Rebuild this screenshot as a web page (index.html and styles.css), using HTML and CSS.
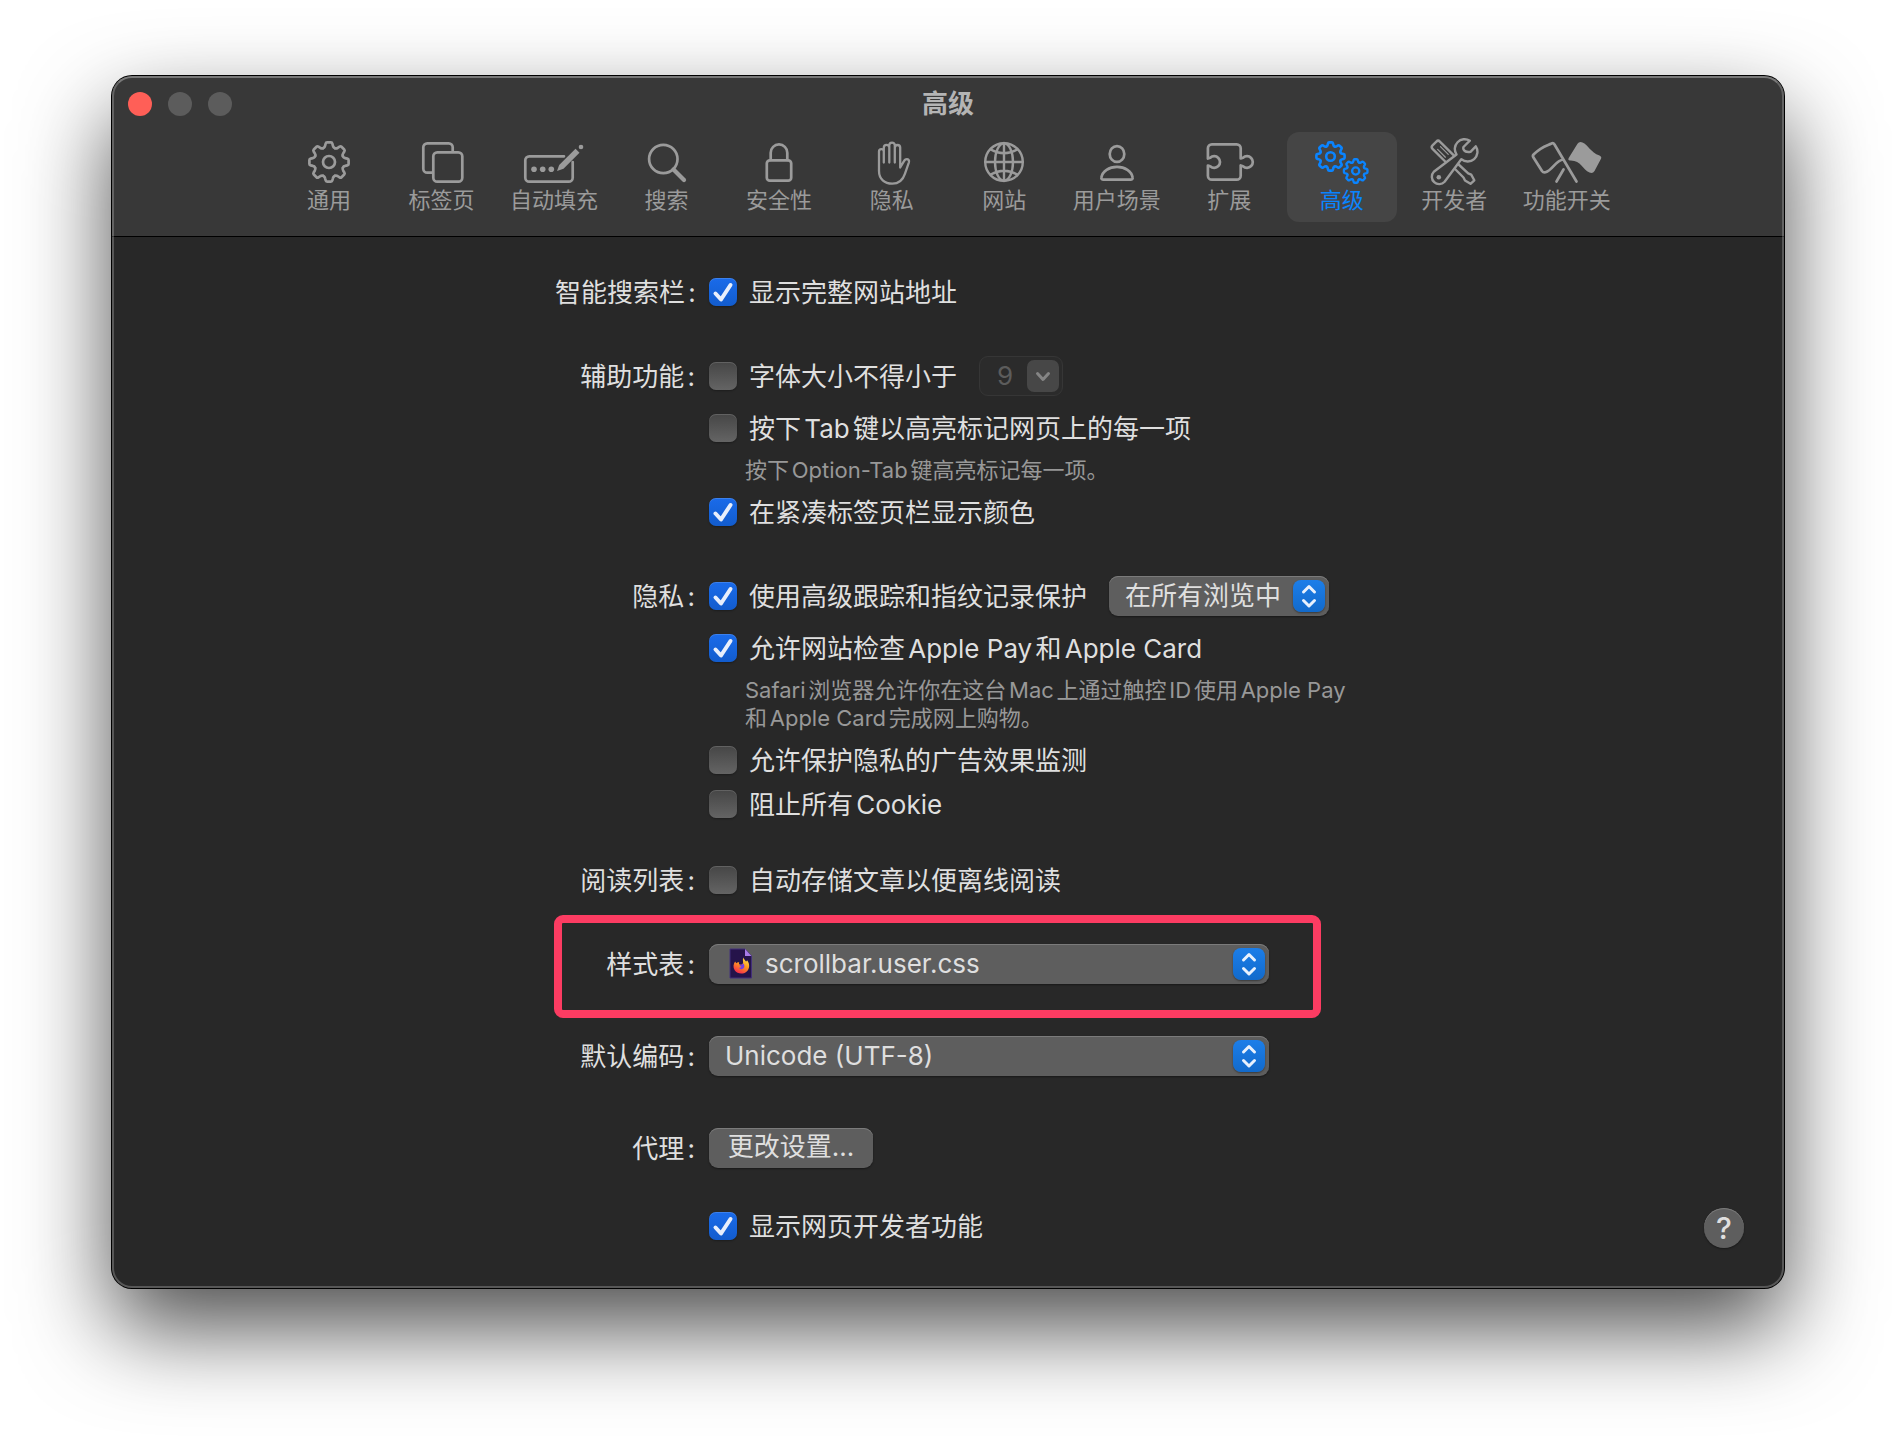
FILE: index.html
```html
<!DOCTYPE html>
<html lang="zh-CN">
<head>
    <meta charset="UTF-8">
    <meta name="viewport" content="width=device-width, initial-scale=1.0">
    <title>高级</title>
    <link rel="stylesheet" href="styles.css">
</head>
<body>
    <!-- shared shapes -->
    <svg class="defs" aria-hidden="true">
        <defs>
            <path id="tooth" d="M-5.7-13.9Q-4.2-14.5-3.9-16.2L-3.4-18.3Q-3.1-19.6-1.9-19.6H1.9Q3.1-19.6 3.4-18.3L3.9-16.2Q4.2-14.5 5.7-13.9"/>
            <g id="gear">
                <use href="#tooth"/>
                <use href="#tooth" transform="rotate(45)"/>
                <use href="#tooth" transform="rotate(90)"/>
                <use href="#tooth" transform="rotate(135)"/>
                <use href="#tooth" transform="rotate(180)"/>
                <use href="#tooth" transform="rotate(225)"/>
                <use href="#tooth" transform="rotate(270)"/>
                <use href="#tooth" transform="rotate(315)"/>
                <circle r="6"/>
            </g>
            <symbol id="tick" viewBox="0 0 28 28">
                <path d="M6.5 15.5l5.5 6L21.500 7" fill="none" stroke="#e8effc" stroke-width="4" stroke-linecap="round" stroke-linejoin="round"/>
            </symbol>
            <symbol id="updown" viewBox="0 0 32 32">
                <path d="M10.500 12L16 6.500l5.500 5.500M10.500 20.500L16 26l5.500-5.500" fill="none" stroke="#e8f1fd" stroke-width="3" stroke-linecap="round" stroke-linejoin="round"/>
            </symbol>
        </defs>
    </svg>

    <main class="window">
        <header class="header">
            <div class="titlebar">
                <div class="lights">
                    <button class="light close" aria-label="关闭"></button>
                    <button class="light" aria-label="最小化" disabled></button>
                    <button class="light" aria-label="缩放" disabled></button>
                </div>
                <h1>高级</h1>
            </div>
            <nav class="toolbar">
                <button class="tab">
                    <svg viewBox="0 0 80 48"><use href="#gear" transform="translate(40 24)"/></svg>
                    <span>通用</span>
                </button>
                <button class="tab">
                    <svg viewBox="0 0 80 48"><path d="M50.700 13V9.300a4 4 0 0 0-4-4H25.300a4 4 0 0 0-4 4v21.400a4 4 0 0 0 4 4H30"/><rect x="31.300" y="14.300" width="29" height="29.400" rx="4"/></svg>
                    <span>标签页</span>
                </button>
                <button class="tab">
                    <svg viewBox="0 0 80 48"><path d="M50 18.300H15.300a4 4 0 0 0-4 4v17.400a4 4 0 0 0 4 4h39.400a4 4 0 0 0 4-4V24"/><g class="solid"><circle cx="20" cy="31.300" r="2.800"/><circle cx="28.700" cy="31.300" r="2.800"/><circle cx="37.300" cy="31.300" r="2.800"/><path d="M43 33l2.200-6L61.500 10.700l4 4L49.500 30.700z"/><circle cx="67" cy="9" r="2.300"/></g></svg>
                    <span>自动填充</span>
                </button>
                <button class="tab">
                    <svg viewBox="0 0 80 48"><circle cx="36.300" cy="21" r="14.200"/><path d="M46.500 31.500l10.500 10.500" stroke-width="4.200"/></svg>
                    <span>搜索</span>
                </button>
                <button class="tab">
                    <svg viewBox="0 0 80 48"><rect x="27.800" y="22.300" width="24.400" height="20.400" rx="3"/><path d="M31.700 22V14.700a8.300 8.300 0 0 1 16.600 0V22"/></svg>
                    <span>安全性</span>
                </button>
                <button class="tab">
                    <svg viewBox="0 0 80 48" stroke-width="2.300"><path d="M31.800 24.500V13.500a2.400 2.400 0 0 0-4.800 0V33c0 8 5.500 12.600 13.300 12.600 7 0 10.700-4 12.600-9.800l4-11.500c.6-2-.6-3.200-2-3.200s-2.400.8-3.200 2.600L48.200 29.500V9.700a2.700 2.700 0 0 0-5.400 0V24.500M42.800 10V7.300a2.750 2.750 0 0 0-5.500 0V24.500M37.300 10V9.700a2.750 2.750 0 0 0-5.500 0V14"/></svg>
                    <span>隐私</span>
                </button>
                <button class="tab">
                    <svg viewBox="0 0 80 48" stroke-width="2.400"><circle cx="40" cy="24" r="18.800"/><ellipse cx="40" cy="24" rx="9" ry="18.800"/><path d="M40 5v38M21.200 24h37.600M26.700 11.500Q40 19 53.300 11.500M26.700 36.500Q40 29 53.300 36.500"/></svg>
                    <span>网站</span>
                </button>
                <button class="tab">
                    <svg viewBox="0 0 80 48"><ellipse cx="40" cy="16" rx="7.300" ry="7.900"/><path d="M24.400 39.500c1-6.500 7.600-10.600 15.600-10.600s14.600 4.100 15.600 10.600c.3 1.400-.6 2.200-2 2.200H26.400c-1.400 0-2.300-.8-2-2.200z"/></svg>
                    <span>用户场景</span>
                </button>
                <button class="tab">
                    <svg viewBox="0 0 80 48"><path d="M18.900 20.500V10.300a4 4 0 0 1 4-4h24.800a4 4 0 0 1 4 4V20.500L54 19.800a5.800 5.800 0 1 1 0 8.400L51.700 27.500V37.700a4 4 0 0 1-4 4H22.900a4 4 0 0 1-4-4V27.500L21.200 28.200a5.800 5.800 0 1 0 0-8.400z"/></svg>
                    <span>扩展</span>
                </button>
                <button class="tab active">
                    <svg viewBox="0 0 80 48"><use href="#gear" transform="translate(28.500 18.500) scale(.72)" stroke-width="3.600"/><use href="#gear" transform="translate(53.700 33) scale(.6)" stroke-width="3.900"/></svg>
                    <span>高级</span>
                </button>
                <button class="tab">
                    <svg viewBox="0 0 80 48" stroke-width="2.400"><g transform="translate(21.500 6.500) rotate(45)"><rect x="-1.500" y="-5.200" width="25" height="10.400" rx="2.500"/><path d="M5 -2h11M5 2h11" stroke-width="1.200"/></g><path d="M38 28L49.500 39.500 51 42.500 56.500 45.800 60.300 42.300 57.200 36.600 54.200 35.400 43 25"/><path class="mask" d="M55.800 2.700A9.800 9.800 0 0 0 42.500 16.500L19.800 33.800A7.300 7.300 0 1 0 30.600 43.800L47.300 21.200A9.800 9.800 0 0 0 61.800 8.300L56.500 13.800Q51.500 14.500 50 12.300 48.500 9.500 50 8.500z"/><circle class="solid" cx="24.800" cy="39.200" r="2.300"/></svg>
                    <span>开发者</span>
                </button>
                <button class="tab">
                    <svg viewBox="0 0 80 48"><path d="M49.500 43.500L27.500 6.500Q26.300 4.600 24.500 5.500C19 8 14.500 8.500 6.800 16.300Q5.300 17.700 6.300 19.300L15 33Q16.300 34.800 18.500 34.300C26 32 28 22.500 36.500 21.500M36.500 31.500L29.500 43.500"/><path class="solid" d="M50.500 5.700Q52.300 3.300 55.500 4.500C61 6.500 63.500 14.500 72.500 17.500Q75 18.700 74 20.800L67.500 33Q65.800 35.800 62.500 34.500C55.500 31.500 54 22 43 22.500Q40.500 22.300 41.700 20z"/></svg>
                    <span>功能开关</span>
                </button>
            </nav>
        </header>

        <form class="form">
            <section class="row">
                <div class="label">智能搜索栏:</div>
                <div class="controls">
                    <div class="line">
                        <label class="option"><span class="box"><input type="checkbox" checked><svg><use href="#tick"/></svg></span>显示完整网站地址</label>
                    </div>
                </div>
            </section>

            <section class="row">
                <div class="label">辅助功能:</div>
                <div class="controls">
                    <div class="line">
                        <label class="option"><span class="box"><input type="checkbox"><svg><use href="#tick"/></svg></span>字体大小不得小于</label>
                        <div class="combo">
                            <input type="text" value="9" aria-label="最小字体大小" disabled>
                            <button type="button" aria-label="选择字体大小" disabled>
                                <svg viewBox="0 0 32 32"><path d="M10.500 13.500L16 19.500l5.500-6" fill="none" stroke="#858585" stroke-width="3" stroke-linecap="round" stroke-linejoin="round"/></svg>
                            </button>
                        </div>
                    </div>
                    <div class="line">
                        <label class="option"><span class="box"><input type="checkbox"><svg><use href="#tick"/></svg></span>按下Tab键以高亮标记网页上的每一项</label>
                    </div>
                    <p class="hint">按下Option-Tab键高亮标记每一项。</p>
                    <div class="line">
                        <label class="option"><span class="box"><input type="checkbox" checked><svg><use href="#tick"/></svg></span>在紧凑标签页栏显示颜色</label>
                    </div>
                </div>
            </section>

            <section class="row">
                <div class="label">隐私:</div>
                <div class="controls">
                    <div class="line">
                        <label class="option"><span class="box"><input type="checkbox" checked><svg><use href="#tick"/></svg></span>使用高级跟踪和指纹记录保护</label>
                        <div class="popup small">
                            <select aria-label="保护范围"><option>在所有浏览中</option></select>
                            <svg class="arrows"><use href="#updown"/></svg>
                        </div>
                    </div>
                    <div class="line">
                        <label class="option"><span class="box"><input type="checkbox" checked><svg><use href="#tick"/></svg></span>允许网站检查Apple Pay和Apple Card</label>
                    </div>
                    <p class="hint">Safari浏览器允许你在这台Mac上通过触控ID使用Apple Pay<br>和Apple Card完成网上购物。</p>
                    <div class="line">
                        <label class="option"><span class="box"><input type="checkbox"><svg><use href="#tick"/></svg></span>允许保护隐私的广告效果监测</label>
                    </div>
                    <div class="line tight">
                        <label class="option"><span class="box"><input type="checkbox"><svg><use href="#tick"/></svg></span>阻止所有Cookie</label>
                    </div>
                </div>
            </section>

            <section class="row near">
                <div class="label">阅读列表:</div>
                <div class="controls">
                    <div class="line">
                        <label class="option"><span class="box"><input type="checkbox"><svg><use href="#tick"/></svg></span>自动存储文章以便离线阅读</label>
                    </div>
                </div>
            </section>

            <section class="row highlight">
                <label class="label" for="stylesheet">样式表:</label>
                <div class="popup with-icon">
                    <svg class="file" viewBox="0 0 24 32">
                        <defs>
                            <linearGradient id="flame" x1=".8" y1="0" x2=".3" y2="1">
                                <stop offset="0" stop-color="#ffe94a"/>
                                <stop offset=".45" stop-color="#ff9a1f"/>
                                <stop offset="1" stop-color="#f5264f"/>
                            </linearGradient>
                        </defs>
                        <path d="M1 1h15l6.500 7v22H1z" fill="#25134a" stroke="#43307a"/>
                        <path d="M16 1l6.500 7H16z" fill="#a77be8"/>
                        <path d="M14.500 9.500c.2 1.800 1.500 2.300 2.500 4 .8-.3 1-.8.900-1.500 2.600 3 3.200 7.500.6 10.700-3.300 4-10 3.800-12.800-.4-1.900-3-1.400-6.300.4-8.800l1.200 1.700c.9-.8 1.900-1 2.900-.7-.7 1.300.2 2.300 1.800 2.300 1.300 0 2.200-1 2.100-2.500-.1-1.600-.6-3.300.4-4.800z" fill="url(#flame)"/>
                        <path d="M10.500 16.500c1.500.8 2.800.2 3.500-1.200 1.800 1.500 1.900 4.200.2 5.300-1.500 1-3.500.6-4.400-.9 1.300.2 2.200-.3 2.500-1.300-1 .1-1.800-.6-1.800-1.900z" fill="#7540e0"/>
                    </svg>
                    <select id="stylesheet"><option>scrollbar.user.css</option></select>
                    <svg class="arrows"><use href="#updown"/></svg>
                </div>
            </section>

            <section class="row far">
                <label class="label" for="encoding">默认编码:</label>
                <div class="popup">
                    <select id="encoding"><option>Unicode (UTF-8)</option></select>
                    <svg class="arrows"><use href="#updown"/></svg>
                </div>
            </section>

            <section class="row far">
                <div class="label">代理:</div>
                <div class="controls">
                    <button type="button" class="push">更改设置...</button>
                </div>
            </section>

            <section class="row last">
                <div class="label"></div>
                <div class="controls">
                    <div class="line">
                        <label class="option"><span class="box"><input type="checkbox" checked><svg><use href="#tick"/></svg></span>显示网页开发者功能</label>
                    </div>
                </div>
            </section>
        </form>

        <button class="help" aria-label="帮助">?</button>
    </main>
</body>
</html>
```
FILE: styles.css
```css
* {
    margin: 0;
    padding: 0;
    box-sizing: border-box;
}

body {
    min-height: 100vh;
    padding: 76px 112px 148px;
    background: #fff;
    color: #dfdfdf;
    font-family: Inter, "Noto Sans CJK SC", sans-serif;
    font-size: 26px;
    line-height: 40px;
    text-autospace: normal;
    overflow: hidden;
}

button, input, select {
    font: inherit;
    color: inherit;
    border: none;
    background: none;
    appearance: none;
}

.defs {
    position: absolute;
    width: 0;
    height: 0;
}

.window {
    position: relative;
    background: #282828;
    border-radius: 20px;
    padding-bottom: 42px;
    box-shadow: 0 0 0 1px #000, 0 40px 90px rgba(0, 0, 0, 0.7);
}

/* light rim around the whole window */
.window::after {
    content: "";
    position: absolute;
    inset: 0;
    border: 2px solid rgba(255, 255, 255, 0.22);
    border-top-color: rgba(255, 255, 255, 0.32);
    border-radius: 20px;
    pointer-events: none;
}

.header {
    background: #383838;
    border-bottom: 1px solid #000;
    border-radius: 20px 20px 0 0;
    padding-bottom: 14px;
}

.titlebar {
    display: grid;
    grid-template-columns: 1fr auto 1fr;
    align-items: center;
    height: 56px;
    padding: 0 16px;
}

.titlebar h1 {
    color: #b4b4b4;
    font-size: 26px;
    font-weight: bold;
}

.lights {
    display: flex;
    gap: 16px;
}

.light {
    width: 24px;
    height: 24px;
    border-radius: 50%;
    background: #5c5c5c;
}

.light.close {
    background: #ff5f57;
}

.toolbar {
    display: flex;
    justify-content: space-between;
    max-width: 1348px;
    margin: 0 auto;
}

.tab {
    display: flex;
    flex-direction: column;
    align-items: center;
    width: 110px;
    height: 90px;
    padding-top: 6px;
    border-radius: 12px;
    color: #9b9b9b;
    font-size: 22px;
    line-height: 28px;
}

.tab svg {
    width: 80px;
    height: 48px;
    fill: none;
    stroke: currentColor;
    stroke-linecap: round;
    stroke-linejoin: round;
}

.tab svg:not([stroke-width]) {
    stroke-width: 2.7px;
}

.tab .solid {
    fill: currentColor;
    stroke: none;
}

.tab .mask {
    fill: #383838;
}

.tab.active {
    background: #454545;
    color: #0a84ff;
}

.form {
    max-width: 786px;
    margin: 0 auto;
    padding-top: 35px;
}

.row {
    position: relative;
    display: grid;
    grid-template-columns: 140px 1fr;
    column-gap: 14px;
}

.row + .row {
    margin-top: 44px;
}

.row + .near {
    margin-top: 36px;
}

.row + .far {
    margin-top: 52px;
}

.row + .last {
    margin-top: 38px;
}

.label {
    height: 40px;
    padding-top: 1px;
    text-align: right;
    white-space: nowrap;
}

.line {
    display: flex;
    align-items: center;
    height: 40px;
}

.line + .line {
    margin-top: 12px;
}

.line + .tight {
    margin-top: 4px;
}

.option {
    display: flex;
    align-items: center;
    gap: 12px;
    padding-top: 2px;
    white-space: nowrap;
}

.box {
    position: relative;
    width: 28px;
    height: 28px;
    margin-bottom: 2px;
}

.box input {
    display: block;
    width: 28px;
    height: 28px;
    border-radius: 7px;
    background: linear-gradient(#464646, #646464);
    box-shadow: inset 0 1px 0 rgba(255, 255, 255, 0.15), 0 1px 2px rgba(0, 0, 0, 0.3);
}

.box svg {
    position: absolute;
    inset: 0;
    width: 28px;
    height: 28px;
    display: none;
    pointer-events: none;
}

.box input:checked {
    background: linear-gradient(#1a6bea, #125ccd);
}

.box input:checked + svg {
    display: block;
}

.hint {
    margin: 8px 0 8px 36px;
    color: #989898;
    font-size: 22px;
    line-height: 28px;
    white-space: nowrap;
}

.combo {
    display: flex;
    width: 84px;
    height: 40px;
    margin-left: 22px;
    padding: 3px;
    border: 1px solid #363636;
    border-radius: 9px;
    background: #2b2b2b;
}

.combo input {
    width: 44px;
    padding-left: 14px;
    color: #5c5c5c;
}

.combo button {
    width: 32px;
    height: 32px;
    border-radius: 7px;
    background: #474747;
}

.combo svg {
    display: block;
}

.popup {
    position: relative;
    width: 560px;
    height: 40px;
}

.popup.small {
    width: 220px;
    margin-left: 22px;
}

.popup select {
    display: block;
    width: 100%;
    height: 40px;
    padding: 0 44px 2px 16px;
    border-radius: 9px;
    background: #5e5e5e;
    box-shadow: inset 0 1px 0 #7b7b7b, 0 1px 2px rgba(0, 0, 0, 0.4);
}

.popup.with-icon select {
    padding-left: 56px;
}

.popup .file {
    position: absolute;
    left: 20px;
    top: 4px;
    width: 24px;
    height: 32px;
}

.popup .arrows {
    position: absolute;
    right: 4px;
    top: 4px;
    width: 32px;
    height: 32px;
    border-radius: 8px;
    background: linear-gradient(#1c7ee9, #126acb);
    box-shadow: 0 1px 2px rgba(0, 0, 0, 0.4);
    pointer-events: none;
}

/* red frame over the stylesheet row */
.highlight::after {
    content: "";
    position: absolute;
    inset: -29px 20px -34px -1px;
    border: 8px solid #fc3c62;
    border-radius: 9px;
    pointer-events: none;
}

.push {
    width: 164px;
    height: 40px;
    display: block;
    padding-bottom: 2px;
    line-height: 38px;
    text-autospace: no-autospace;
    border-radius: 9px;
    background: #5e5e5e;
    box-shadow: inset 0 1px 0 #7b7b7b, 0 1px 2px rgba(0, 0, 0, 0.4);
}

.help {
    position: absolute;
    right: 40px;
    bottom: 40px;
    width: 40px;
    height: 40px;
    border-radius: 50%;
    background: #5e5e5e;
    box-shadow: inset 0 1px 0 #7b7b7b, 0 1px 2px rgba(0, 0, 0, 0.4);
    font-size: 30px;
    font-weight: 500;
}
```
